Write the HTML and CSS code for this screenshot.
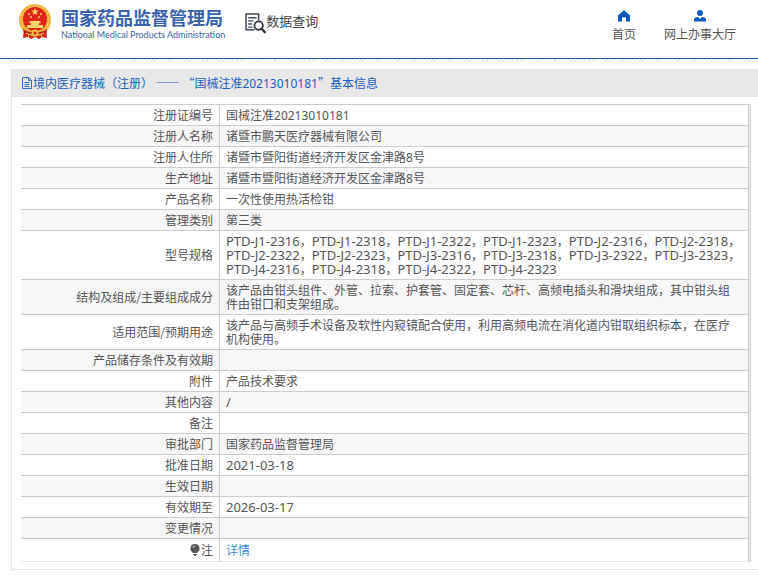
FILE: index.html
```html
<!DOCTYPE html>
<html lang="zh-CN">
<head>
<meta charset="utf-8">
<title>国家药品监督管理局 数据查询</title>
<link rel="stylesheet" href="styles.css">
</head>
<body>
<header class="top">
  <div class="brand">
    <svg class="emblem" viewBox="0 0 34 36" aria-hidden="true">
      <path d="M6 24h22l1 10-5-1-3 2-4-2-4 2-3-2-5 1z" fill="#d9261c"/>
      <circle cx="17" cy="16" r="16" fill="#eeb23c"/>
      <circle cx="17" cy="16" r="14" fill="none" stroke="#f6cf70" stroke-dasharray="2 2"/>
      <circle cx="17" cy="15" r="12" fill="#df2419"/>
      <path d="M17 4l1 2.500h2.800l-2.200 1.700.8 2.800-2.400-1.600-2.400 1.600.8-2.800-2.200-1.700H16z" fill="#f8d568"/>
      <g fill="#f8d568"><circle cx="11" cy="10" r="1"/><circle cx="23" cy="10" r="1"/><circle cx="13" cy="13" r="1"/><circle cx="21" cy="13" r="1"/>
      <path d="M12 17h10l1 2h-12zM13 19h8v2h-8zM9 21h16v3H9z"/></g>
      <path d="M5 25q6 5 12 2 6 3 12-2l-1 4-7 1-4-2-4 2-7-1z" fill="#bd1715"/>
      <circle cx="17" cy="29" r="3.500" fill="#f2bd48"/><circle cx="17" cy="29" r="1.500" fill="#d9261c"/>
      <path d="M8 29l3 1-1 4M26 29l-3 1 1 4" fill="none" stroke="#f2bd48"/>
    </svg>
    <div class="names">
      <div class="name-zh">国家药品监督管理局</div>
      <div class="name-en">National Medical Products Administration</div>
    </div>
  </div>
  <div class="query">
    <svg class="query-icon" viewBox="0 0 20 20" aria-hidden="true">
      <path d="M13 7V1H1v15h8" fill="none" stroke="#444b59" stroke-width="1.500"/>
      <path d="M3 4.500h8M3 7.500h5M3 10.500h4M3 13.500h4" stroke="#444b59" stroke-width="1.300"/>
      <circle cx="13" cy="12" r="4" fill="#fff" stroke="#30343d" stroke-width="1.700"/>
      <path d="M16 15l3.500 4" stroke="#30343d" stroke-width="2.200"/>
    </svg>
    <span>数据查询</span>
  </div>
  <nav class="nav">
    <a href="#home">
      <svg class="nav-icon" viewBox="0 0 12 12" aria-hidden="true"><path d="M6 0L0 5.500V11.500h4V7.500h4v4h4v-6z" fill="#0b5cc0"/></svg>
      首页
    </a>
    <a href="#hall">
      <svg class="nav-icon" viewBox="0 0 12 12" aria-hidden="true"><circle cx="6" cy="3" r="3" fill="#0b5cc0"/><path d="M0 11.500V10q0-3 4-3l2 2 2-2q4 0 4 3v1.500z" fill="#0b5cc0"/></svg>
      网上办事大厅
    </a>
  </nav>
</header>
<main class="panel">
  <h1 class="title">
    <svg class="doc-icon" viewBox="0 0 12 12" aria-hidden="true"><path d="M1.500.5h6l3 3v8h-9zM7.500.5v3h3M3.500 5.500h5M3.500 7.500h5M3.500 9.500h5" fill="none" stroke="#2c6cc4"/></svg>
    <span>境内医疗器械（注册） —— “国械注准<span class="num">20213010181</span>”基本信息</span>
  </h1>
  <div class="body">
    <table class="info">
      <tbody>
      <tr><th scope="row">注册证编号</th><td>国械注准<span class="num">20213010181</span></td></tr>
      <tr><th scope="row">注册人名称</th><td>诸暨市鹏天医疗器械有限公司</td></tr>
      <tr><th scope="row">注册人住所</th><td>诸暨市暨阳街道经济开发区金津路<span class="num">8</span>号</td></tr>
      <tr><th scope="row">生产地址</th><td>诸暨市暨阳街道经济开发区金津路<span class="num">8</span>号</td></tr>
      <tr><th scope="row">产品名称</th><td>一次性使用热活检钳</td></tr>
      <tr><th scope="row">管理类别</th><td>第三类</td></tr>
      <tr><th scope="row">型号规格</th><td><span class="code">PTD-J1-2316</span>，<span class="code">PTD-J1-2318</span>，<span class="code">PTD-J1-2322</span>，<span class="code">PTD-J1-2323</span>，<span class="code">PTD-J2-2316</span>，<span class="code">PTD-J2-2318</span>，<span class="code">PTD-J2-2322</span>，<span class="code">PTD-J2-2323</span>，<span class="code">PTD-J3-2316</span>，<span class="code">PTD-J3-2318</span>，<span class="code">PTD-J3-2322</span>，<span class="code">PTD-J3-2323</span>，<span class="code">PTD-J4-2316</span>，<span class="code">PTD-J4-2318</span>，<span class="code">PTD-J4-2322</span>，<span class="code">PTD-J4-2323</span></td></tr>
      <tr><th scope="row">结构及组成/主要组成成分</th><td>该产品由钳头组件、外管、拉索、护套管、固定套、芯杆、高频电插头和滑块组成，其中钳头组件由钳口和支架组成。</td></tr>
      <tr><th scope="row">适用范围/预期用途</th><td>该产品与高频手术设备及软性内窥镜配合使用，利用高频电流在消化道内钳取组织标本，在医疗机构使用。</td></tr>
      <tr><th scope="row">产品储存条件及有效期</th><td></td></tr>
      <tr><th scope="row">附件</th><td>产品技术要求</td></tr>
      <tr><th scope="row">其他内容</th><td><span class="code">/</span></td></tr>
      <tr><th scope="row">备注</th><td></td></tr>
      <tr><th scope="row">审批部门</th><td>国家药品监督管理局</td></tr>
      <tr><th scope="row">批准日期</th><td><span class="code">2021-03-18</span></td></tr>
      <tr><th scope="row">生效日期</th><td></td></tr>
      <tr><th scope="row">有效期至</th><td><span class="code">2026-03-17</span></td></tr>
      <tr><th scope="row">变更情况</th><td></td></tr>
      <tr class="note"><th scope="row"><svg class="bulb" viewBox="0 0 10 12" aria-hidden="true"><path d="M5 0a4.500 4.500 0 0 1 2.500 8.300V9h-5v-.7A4.500 4.500 0 0 1 5 0zM3 10h4v1H6v1H4v-1H3z" fill="#555"/><path d="M3 4q0-2 2-2" fill="none" stroke="#ddd"/></svg>注</th><td><a href="#detail">详情</a></td></tr>
      </tbody>
    </table>
  </div>
</main>
</body>
</html>
```
FILE: styles.css
```css
* { box-sizing: border-box; }
body {
  margin: 0;
  background: #fff;
  color: #555;
  font: 12px/14px "Noto Sans CJK SC", sans-serif;
}
a { text-decoration: none; }
svg { display: block; }

.top {
  display: flex;
  height: 62px;
  padding-left: 18px;
  padding-right: 22px;
  background:
    linear-gradient(#1c5ba5, #1c5ba5) 0 58px / 100% 1px no-repeat,
    repeating-linear-gradient(135deg, #dbe8f7 0 1px, #fff 1px 3px) 0 59px / 100% 3px no-repeat;
}
.brand { display: flex; gap: 9px; padding-top: 4px; }
.emblem { width: 34px; height: 36px; }
.names { padding-top: 2px; color: #3a62ad; font-weight: 700; white-space: nowrap; }
.name-zh { font-size: 18px; line-height: 22px; }
.name-en { font: 400 9px/14px Lato, sans-serif; }
.query {
  display: flex;
  margin-left: 20px;
  padding-top: 13px;
  color: #444;
  font-size: 13px;
  line-height: 16px;
  white-space: nowrap;
}
.query-icon { width: 21px; height: 21px; }
.nav { display: flex; gap: 28px; margin-left: auto; padding-top: 10px; }
.nav a {
  display: flex;
  flex-direction: column;
  align-items: center;
  gap: 4px;
  color: #555;
  line-height: 16px;
}
.nav-icon { width: 12px; height: 12px; }

.panel {
  margin: 7px 0 0 11px;
  border-left: 1px solid #e6e6e6;
  border-bottom: 1px solid #e6e6e6;
}
.title {
  display: flex;
  align-items: center;
  height: 28px;
  margin: 0;
  padding-left: 9px;
  background: #e8e8e8;
  color: #1a5fc0;
  font-size: 12px;
  font-weight: 400;
}
.doc-icon { width: 12px; height: 12px; }
.num, .code { font-family: "Noto Sans", sans-serif; line-height: 10px; }
.code { font-size: 13px; white-space: nowrap; }

.body { padding: 7px 7px 7px 9px; }
.info {
  width: 100%;
  border-collapse: separate;
  border-spacing: 0;
  border-right: 1px solid #ccc;
  padding-right: 1px;
  background: #f1f1f4;
}
.info th, .info td {
  height: 21px;
  padding: 3px 7px 3px 6px;
  border-top: 1px solid #ccc;
  border-right: 1px solid #ccc;
  background: #fff;
  font-weight: 400;
  text-align: left;
}
.info th { width: 199px; padding: 3px 6px 3px 0; text-align: right; }
.info tr:nth-child(even) > * { background: #f7f7f7; }
.info .note > * { height: 24px; border-bottom: 1px solid #e6e6e6; }
.bulb { display: inline-block; width: 10px; height: 12px; margin-right: 1px; vertical-align: -1px; }
.info a { color: #3c8de0; }
```
